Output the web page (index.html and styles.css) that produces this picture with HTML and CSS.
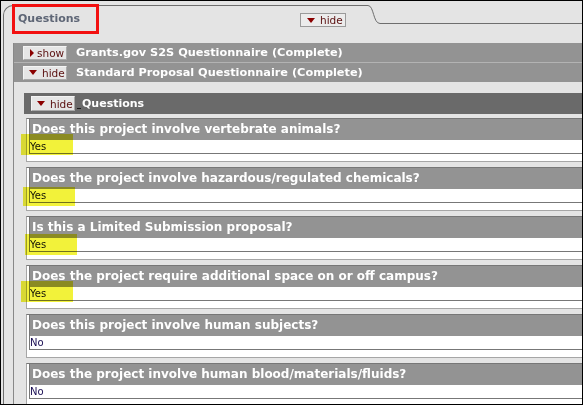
FILE: index.html
```html
<!DOCTYPE html>
<html lang="en">

<head>
    <meta charset="utf-8">
    <meta name="viewport" content="width=device-width, initial-scale=1.0">
    <title>Questions</title>
    <link rel="stylesheet" href="styles.css">
</head>

<body>
    <div class="frame">
        <div class="tabrow">
            <div class="tab">
                <span class="tab-title">Questions</span>
                <button class="btn btn-tab"><span class="tri tri-down"></span>hide</button>
            </div>
            <svg class="tab-curve" width="12" height="19" viewBox="0 0 12 19">
                <path d="M0 0.5 C6 0.5 5 18.5 12 18.5" fill="none" stroke="#6e6e6e" stroke-width="1"/>
            </svg>
            <div class="tab-rest"></div>
        </div>

        <div class="tab-body">
            <div class="content">
                <div class="bar bar-first">
                    <button class="btn"><span class="tri tri-right"></span>show</button>
                    <span class="bar-text">Grants.gov S2S Questionnaire (Complete)</span>
                </div>
                <div class="bar">
                    <button class="btn"><span class="tri tri-down"></span>hide</button>
                    <span class="bar-text">Standard Proposal Questionnaire (Complete)</span>
                </div>

                <div class="panel">
                    <div class="panel-head">
                        <button class="btn btn-panel"><span class="tri tri-down"></span>hide</button>
                        <span class="under"></span>Questions
                    </div>

                    <div class="qbox">
                        <div class="q">
                            <div class="q-head">Does this project involve vertebrate animals?</div>
                            <div class="q-ans">Yes<span class="hl hl-1"></span></div>
                        </div>
                    </div>
                    <div class="qbox">
                        <div class="q">
                            <div class="q-head">Does the project involve hazardous/regulated chemicals?</div>
                            <div class="q-ans">Yes<span class="hl hl-2"></span></div>
                        </div>
                    </div>
                    <div class="qbox">
                        <div class="q">
                            <div class="q-head">Is this a Limited Submission proposal?</div>
                            <div class="q-ans">Yes<span class="hl hl-3"></span></div>
                        </div>
                    </div>
                    <div class="qbox">
                        <div class="q">
                            <div class="q-head">Does the project require additional space on or off campus?</div>
                            <div class="q-ans">Yes<span class="hl hl-4"></span></div>
                        </div>
                    </div>
                    <div class="qbox">
                        <div class="q">
                            <div class="q-head">Does this project involve human subjects?</div>
                            <div class="q-ans no">No</div>
                        </div>
                    </div>
                    <div class="qbox">
                        <div class="q">
                            <div class="q-head">Does the project involve human blood/materials/fluids?</div>
                            <div class="q-ans no">No</div>
                        </div>
                    </div>
                </div>
            </div>
        </div>

        <div class="red-box"></div>
    </div>
</body>

</html>
```

FILE: styles.css
```css
body {
    margin: 0;
    font-family: 'DejaVu Sans', Verdana, sans-serif;
}

.frame {
    position: relative;
    width: 583px;
    height: 405px;
    box-sizing: border-box;
    border: 1px solid #000;
    background-color: #e4e4e4;
    overflow: hidden;
}

/* tab */
.tabrow {
    display: flex;
    margin: 4px 0 0 2px;
    height: 19px;
}

.tab {
    display: flex;
    align-items: flex-start;
    width: 364px;
    height: 18px;
    border-top: 1px solid #6e6e6e;
    border-left: 1px solid #6e6e6e;
    border-top-left-radius: 10px;
}

.tab-title {
    margin: 6px 0 0 14px;
    font-size: 11px;
    line-height: 13px;
    font-weight: bold;
    color: #5e6676;
}

.tab-curve {
    flex: none;
    display: block;
}

.tab-rest {
    flex: 1;
    border-bottom: 1px solid #6e6e6e;
}

.red-box {
    position: absolute;
    left: 11px;
    top: 3px;
    width: 81px;
    height: 24px;
    border: 3px solid #f21010;
}

/* buttons */
.btn {
    display: inline-flex;
    align-items: center;
    box-sizing: border-box;
    width: 44px;
    height: 14px;
    padding: 0 0 0 5px;
    margin: 0;
    border: 1px solid;
    border-color: #f4f4f4 #a9a9a9 #a9a9a9 #f4f4f4;
    background-color: #e6e6e6;
    font-family: 'DejaVu Sans', Verdana, sans-serif;
    font-size: 10.5px;
    line-height: 12px;
    color: #5a1010;
}

.btn-tab {
    width: 46px;
    height: 14px;
    margin: 7px 22px 0 auto;
    border-color: #9a9a9a;
    background-color: #ececec;
    padding-left: 6px;
}

.btn-panel {
    width: 44px;
    height: 15px;
    margin-left: 7px;
}

.tri {
    display: inline-block;
    width: 0;
    height: 0;
    margin-right: 4px;
}

.tri-down {
    border-left: 4px solid transparent;
    border-right: 4px solid transparent;
    border-top: 5px solid #8a0000;
    margin-right: 5px;
}

.tri-right {
    border-top: 4px solid transparent;
    border-bottom: 4px solid transparent;
    border-left: 4px solid #8a0000;
    margin-left: 1px;
    margin-right: 3px;
}

/* body of the tab */
.tab-body {
    margin-left: 2px;
    padding: 19px 0 0 9px;
    border-left: 1px solid #6e6e6e;
    height: 400px;
}

.content {
    width: 640px;
    border-left: 1px solid #888;
    height: 400px;
}

.bar {
    display: flex;
    align-items: center;
    height: 19px;
    padding-left: 9px;
    background-color: #939393;
}

.bar-first {
    border-bottom: 1px solid #b3b3b3;
}

.bar-text {
    margin-left: 9px;
    font-size: 11.3px;
    font-weight: bold;
    color: #fff;
}

/* questions panel */
.panel {
    margin: 11px 0 0 10px;
}

.panel-head {
    display: flex;
    align-items: center;
    height: 21px;
    margin-bottom: 4px;
    background-color: #6a6a6a;
    font-size: 11px;
    font-weight: bold;
    color: #fff;
}

.under {
    width: 4px;
    height: 9px;
    margin: 0 1px 0 2px;
    border-bottom: 1px solid #1a1a1a;
}

.qbox {
    margin: 0 0 5px 2px;
    padding: 0 2px 7px 2px;
    border: 1px solid #a6a6a6;
    border-top-color: #777;
    background-color: #fff;
}

.q {
    border: 1px solid #777;
    border-top: none;
}

.q-head {
    height: 21px;
    padding-left: 2px;
    background-color: #939393;
    font-size: 12px;
    line-height: 21px;
    font-weight: bold;
    color: #fff;
    white-space: nowrap;
}

.q-ans {
    position: relative;
    height: 13px;
    font-size: 10px;
    line-height: 13px;
    color: #111;
}

.no {
    color: #180c52;
}

/* yellow marker over the answers */
.hl {
    position: absolute;
    width: 52px;
    height: 21px;
    background-color: #f2f23a;
    mix-blend-mode: multiply;
    filter: blur(0.7px);
}

.hl-1 {
    left: -9px;
    top: -6px;
}

.hl-2 {
    left: -7px;
    top: -2px;
    height: 19px;
}

.hl-3 {
    left: -5px;
    top: -4px;
}

.hl-4 {
    left: -9px;
    top: -6px;
}
```
